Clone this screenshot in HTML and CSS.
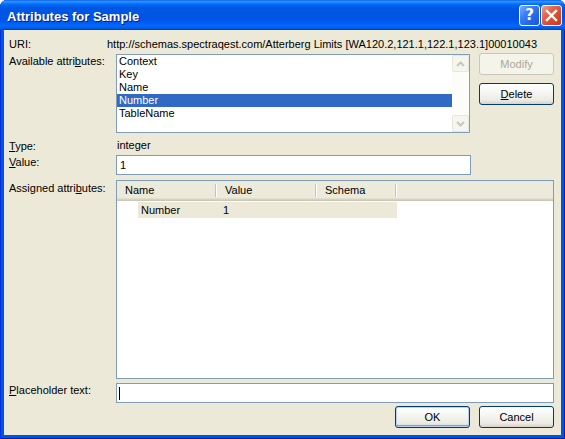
FILE: index.html
```html
<!DOCTYPE html>
<html lang="en">
<head>
    <meta charset="UTF-8">
    <title>Attributes for Sample</title>
    <link rel="stylesheet" href="styles.css">
</head>
<body>
    <div class="window">
        <!-- Title bar -->
        <div class="titlebar">
            <span class="title">Attributes for Sample</span>
            <div class="caption-buttons">
                <div class="cap help">?</div>
                <div class="cap close">
                    <svg width="13" height="13" viewBox="0 0 13 13">
                        <path d="M2 2 L11 11 M11 2 L2 11" stroke="#fff" stroke-width="2.4" stroke-linecap="square"/>
                    </svg>
                </div>
            </div>
        </div>

        <!-- Dialog body -->
        <div class="client">
            <div class="row uri-row">
                <div class="uri-label">URI:</div>
                <div class="uri-value">http://schemas.spectraqest.com/Atterberg Limits [WA120.2,121.1,122.1,123.1]00010043</div>
            </div>

            <div class="row avail-row">
                <div class="label">Available attri<u>b</u>utes:</div>
                <div class="listbox">
                    <ul class="items">
                        <li>Context</li>
                        <li>Key</li>
                        <li>Name</li>
                        <li class="selected">Number</li>
                        <li>TableName</li>
                    </ul>
                    <div class="vscroll">
                        <div class="sbtn">
                            <svg width="9" height="6" viewBox="0 0 9 6"><path d="M1 5 L4.5 1.5 L8 5" fill="none" stroke="#c9c7ba" stroke-width="2"/></svg>
                        </div>
                        <div class="track"></div>
                        <div class="sbtn">
                            <svg width="9" height="6" viewBox="0 0 9 6"><path d="M1 1 L4.5 4.5 L8 1" fill="none" stroke="#c9c7ba" stroke-width="2"/></svg>
                        </div>
                    </div>
                </div>
                <div class="side">
                    <div class="btn disabled">Modify</div>
                    <div class="btn"><u>D</u>elete</div>
                </div>
            </div>

            <div class="row type-row">
                <div class="label"><u>T</u>ype:</div>
                <div class="field-text">integer</div>
            </div>

            <div class="row value-row">
                <div class="label"><u>V</u>alue:</div>
                <div class="textbox narrow">1</div>
            </div>

            <div class="row assigned-row">
                <div class="label">Assigned attri<u>b</u>utes:</div>
                <div class="listview">
                    <div class="lv-header">
                        <div class="hcell name-col"><span>Name</span><i class="sep"></i></div>
                        <div class="hcell value-col"><span>Value</span><i class="sep"></i></div>
                        <div class="hcell schema-col"><span>Schema</span><i class="sep"></i></div>
                    </div>
                    <div class="lv-row">
                        <div class="indent"></div>
                        <div class="cell first">Number</div>
                        <div class="cell value-col">1</div>
                        <div class="cell schema-col"></div>
                    </div>
                </div>
            </div>

            <div class="row placeholder-row">
                <div class="label"><u>P</u>laceholder text:</div>
                <div class="textbox wide"><span class="caret"></span></div>
            </div>

            <div class="row footer">
                <div class="btn default">OK</div>
                <div class="btn">Cancel</div>
            </div>
        </div>
    </div>
</body>
</html>
```

FILE: styles.css
```css
* {
    margin: 0;
    padding: 0;
    box-sizing: border-box;
}

html, body {
    width: 565px;
    height: 439px;
    overflow: hidden;
    background: #fff;
}

body {
    font-family: "Liberation Sans", Arial, sans-serif;
    font-size: 11px;
    color: #000;
}

u {
    text-decoration: underline;
    text-underline-offset: 1px;
}

.window {
    width: 565px;
    height: 439px;
    display: flex;
    flex-direction: column;
    background: #0054e3;
    border-radius: 7px 7px 0 0;
    box-shadow: inset 1px 0 0 #0831d9, inset -1px 0 0 #001ea0, inset 0 -1px 0 #001ea0;
}

/* Title bar */
.titlebar {
    height: 30px;
    flex-shrink: 0;
    display: flex;
    align-items: center;
    justify-content: space-between;
    padding: 0 7px 0 7px;
    border-radius: 7px 7px 0 0;
    background: linear-gradient(180deg,
        #0058ee 0%, #3593ff 4%, #288eff 7%, #127dff 10%, #036ffc 14%,
        #0262ee 20%, #0057e5 26%, #0054e3 56%, #0055eb 66%, #005bf5 76%,
        #026afe 86%, #0062ef 92%, #0052d6 96%, #0040ab 100%);
}

.title {
    color: #fff;
    font-weight: bold;
    font-size: 13px;
    text-shadow: 1px 1px 0 #0a1883;
    padding-top: 2px;
}

.caption-buttons {
    display: flex;
    gap: 1px;
    margin-right: -4px;
    padding-top: 1px;
}

.cap {
    width: 21px;
    height: 21px;
    border: 1px solid #fff;
    border-radius: 3px;
    display: flex;
    align-items: center;
    justify-content: center;
}

.help {
    background: linear-gradient(135deg, #7eaaff 0%, #3c7ef6 35%, #2464e6 70%, #1c56d6 100%);
    color: #fff;
    font-family: "DejaVu Sans", sans-serif;
    font-weight: bold;
    font-size: 15px;
    line-height: 19px;
}

.close {
    background: linear-gradient(135deg, #f0a08a 0%, #e2644a 35%, #d6462a 70%, #c83818 100%);
}

/* Client area */
.client {
    flex: 1;
    margin: 0 4px 4px 4px;
    background: #ece9d8;
    padding: 8px 7px 0 5px;
    display: flex;
    flex-direction: column;
}

.row {
    display: flex;
}

.label {
    width: 107px;
    flex-shrink: 0;
    line-height: 13px;
    padding-top: 1px;
}

.uri-row {
    line-height: 13px;
}

.uri-label {
    width: 98px;
}

.avail-row {
    margin-top: 3px;
}

/* Listbox */
.listbox {
    width: 355px;
    height: 79px;
    border: 1px solid #7f9db9;
    background: #fff;
    display: flex;
}

.items {
    list-style: none;
    flex: 1;
}

.items li {
    height: 13px;
    line-height: 13px;
    padding-left: 2px;
}

.items li.selected {
    background: #316ac5;
    color: #fff;
}

.vscroll {
    width: 17px;
    display: flex;
    flex-direction: column;
    background: #fcfcf9;
}

.vscroll .track {
    flex: 1;
}

.sbtn {
    height: 17px;
    border: 1px solid #e8e7de;
    border-radius: 2px;
    background: #f6f5ee;
    display: flex;
    align-items: center;
    justify-content: center;
}

.side {
    margin-left: 9px;
    margin-top: -1px;
    display: flex;
    flex-direction: column;
    gap: 8px;
}

/* Buttons */
.btn {
    width: 75px;
    height: 22px;
    border: 1px solid #003c74;
    border-radius: 3px;
    background: linear-gradient(180deg, #ffffff 0%, #f6f6f2 40%, #ecebe6 80%, #d8d2c6 100%);
    text-align: center;
    line-height: 20px;
}

.btn.disabled {
    border-color: #c9c7ba;
    background: #f5f4ea;
    color: #aca899;
}

.btn.default {
    box-shadow: inset 0 0 0 1px #b8d0f3, inset 0 -1px 0 1px #7f9ded;
}

.type-row {
    margin-top: 6px;
    line-height: 13px;
}

.field-text {
    padding-left: 1px;
}

.value-row {
    margin-top: 2px;
}

/* Text boxes */
.textbox {
    height: 20px;
    border: 1px solid #7f9db9;
    background: #fff;
    line-height: 18px;
    padding-left: 3px;
}

.textbox.narrow {
    width: 355px;
}

.textbox.wide {
    flex: 1;
    display: flex;
    align-items: center;
    padding-left: 2px;
}

.caret {
    width: 1px;
    height: 13px;
    background: #000;
}

.assigned-row {
    margin-top: 5px;
}

.assigned-row .label {
    padding-top: 2px;
}

/* List view */
.listview {
    flex: 1;
    height: 199px;
    border: 1px solid #7f9db9;
    background: #fff;
}

.lv-header {
    height: 20px;
    display: flex;
    background: linear-gradient(180deg, #ebeadb 0, #ebeadb 17px, #e2decd 17px, #e2decd 18px, #d6d2c2 18px, #d6d2c2 19px, #cbc7b8 19px);
}

.hcell {
    height: 17px;
    display: flex;
    align-items: center;
}

.hcell span {
    flex: 1;
    padding-left: 8px;
}

.sep {
    width: 2px;
    height: 13px;
    margin-top: 2px;
    border-left: 1px solid #c7c5b2;
    border-right: 1px solid #fff;
}

.name-col { width: 100px; }
.value-col { width: 100px; }
.schema-col { width: 80px; }

.lv-row {
    margin-top: 1px;
    height: 16px;
    line-height: 16px;
    display: flex;
}

.indent {
    width: 21px;
}

.cell {
    background: #ece9d8;
}

.cell.first {
    width: 79px;
    padding-left: 3px;
}

.lv-row .value-col {
    padding-left: 6px;
}

.placeholder-row {
    margin-top: 4px;
}

.footer {
    margin-top: 3px;
    justify-content: flex-end;
    gap: 9px;
}
```
